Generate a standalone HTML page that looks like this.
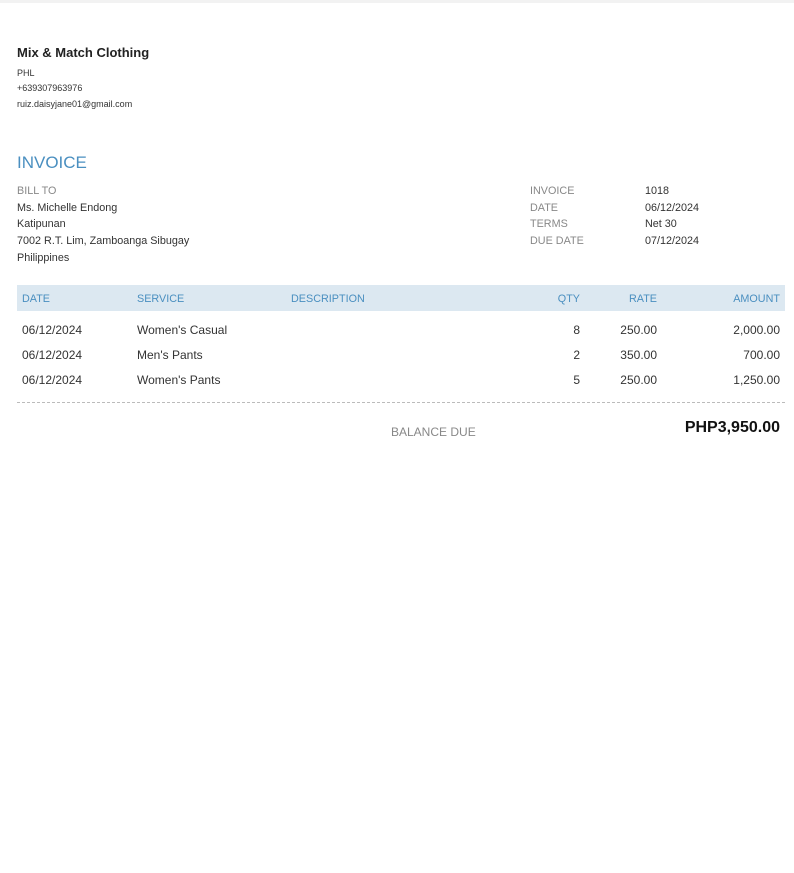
<!DOCTYPE html>
<html><head><meta charset="utf-8"><style>
body{margin:0;width:794px;height:873px;background:#fff;font-family:"Liberation Sans",Arial,sans-serif;position:relative;overflow:hidden}
.a{position:absolute;white-space:nowrap;line-height:1}
.g{color:#888}.d{color:#333}.b{color:#4a8fc0}
.s{font-size:10.8px}
</style></head><body>
<div style="position:absolute;left:0;top:0;width:794px;height:3px;background:#f2f2f2"></div>
<div class="a" style="left:17px;top:46px;font-size:13px;font-weight:bold;color:#222">Mix &amp; Match Clothing</div>
<div class="a d" style="left:17px;top:69px;font-size:9px">PHL</div>
<div class="a d" style="left:17px;top:84px;font-size:9px">+639307963976</div>
<div class="a d" style="left:17px;top:100px;font-size:9px">ruiz.daisyjane01@gmail.com</div>
<div class="a b" style="left:17px;top:154px;font-size:17px">INVOICE</div>
<div class="a g s" style="left:17px;top:186px">BILL TO</div>
<div class="a d s" style="left:17px;top:203px">Ms. Michelle Endong</div>
<div class="a d s" style="left:17px;top:219px">Katipunan</div>
<div class="a d s" style="left:17px;top:236px">7002 R.T. Lim, Zamboanga Sibugay</div>
<div class="a d s" style="left:17px;top:253px">Philippines</div>
<div class="a g s" style="left:530px;top:186px">INVOICE</div>
<div class="a g s" style="left:530px;top:203px">DATE</div>
<div class="a g s" style="left:530px;top:219px">TERMS</div>
<div class="a g s" style="left:530px;top:236px">DUE DATE</div>
<div class="a d s" style="left:645px;top:186px">1018</div>
<div class="a d s" style="left:645px;top:203px">06/12/2024</div>
<div class="a d s" style="left:645px;top:219px">Net 30</div>
<div class="a d s" style="left:645px;top:236px">07/12/2024</div>
<div style="position:absolute;left:17px;top:285px;width:768px;height:26px;background:#dce8f1"></div>
<div class="a b s" style="left:22px;top:294px">DATE</div>
<div class="a b s" style="left:137px;top:294px">SERVICE</div>
<div class="a b s" style="left:291px;top:294px">DESCRIPTION</div>
<div class="a b s" style="right:214px;top:294px">QTY</div>
<div class="a b s" style="right:137px;top:294px">RATE</div>
<div class="a b s" style="right:14px;top:294px">AMOUNT</div>
<div class="a d" style="left:22px;top:324px;font-size:12px">06/12/2024</div>
<div class="a d" style="left:137px;top:324px;font-size:12px">Women's Casual</div>
<div class="a d" style="right:214px;top:324px;font-size:12px">8</div>
<div class="a d" style="right:137px;top:324px;font-size:12px">250.00</div>
<div class="a d" style="right:14px;top:324px;font-size:12px">2,000.00</div>
<div class="a d" style="left:22px;top:349px;font-size:12px">06/12/2024</div>
<div class="a d" style="left:137px;top:349px;font-size:12px">Men's Pants</div>
<div class="a d" style="right:214px;top:349px;font-size:12px">2</div>
<div class="a d" style="right:137px;top:349px;font-size:12px">350.00</div>
<div class="a d" style="right:14px;top:349px;font-size:12px">700.00</div>
<div class="a d" style="left:22px;top:374px;font-size:12px">06/12/2024</div>
<div class="a d" style="left:137px;top:374px;font-size:12px">Women's Pants</div>
<div class="a d" style="right:214px;top:374px;font-size:12px">5</div>
<div class="a d" style="right:137px;top:374px;font-size:12px">250.00</div>
<div class="a d" style="right:14px;top:374px;font-size:12px">1,250.00</div>
<div style="position:absolute;left:17px;top:402px;width:768px;border-top:1px dashed #bbb"></div>
<div class="a g" style="left:391px;top:426px;font-size:12px">BALANCE DUE</div>
<div class="a" style="right:14px;top:420px;font-size:16px;font-weight:bold;color:#111">PHP3,950.00</div>
</body></html>
